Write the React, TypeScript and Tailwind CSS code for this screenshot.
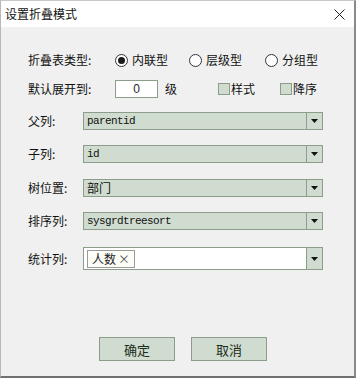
import React from "react";

const cjk = { fontFamily: '"Noto Sans CJK SC", "Noto Sans", sans-serif' };
const mono = { fontFamily: '"Liberation Mono", "Noto Sans CJK SC", monospace' };

function Radio({ checked, label, w }: { checked?: boolean; label: string; w: string }) {
  return (
    <div className={`flex items-center ${w}`}>
      <div className="w-[13px] h-[13px] rounded-full border border-[#333] bg-white flex items-center justify-center">
        {checked && <div className="w-[7px] h-[7px] rounded-full bg-[#1a1a1a]" />}
      </div>
      <span className="ml-[4px] text-[12px] leading-none text-[#111]">{label}</span>
    </div>
  );
}

function Check({ label, w }: { label: string; w: string }) {
  return (
    <div className={`flex items-center ${w}`}>
      <div className="w-[12px] h-[12px] border border-[#8c9d8c] bg-[#cfdccf]" />
      <span className="ml-[1px] text-[12px] leading-none text-[#111]">{label}</span>
    </div>
  );
}

function Arrow() {
  return (
    <svg width="7" height="4" viewBox="0 0 7 4">
      <polygon points="0,0 7,0 3.5,4" fill="#111" />
    </svg>
  );
}

function SelectRow({ label, value, isMono, mt }: { label: string; value: string; isMono?: boolean; mt: string }) {
  return (
    <div className={`flex items-center h-[18px] ${mt}`}>
      <div className="w-[55px] text-[12px] leading-none text-[#111]">{label}</div>
      <div className="w-[240px] h-[18px] border border-[#8c9d8c] bg-[#cfdccf] flex">
        <div
          className={`flex-1 flex items-center pl-[3px] leading-none text-[#111] ${isMono ? "text-[11px] tracking-[-0.6px]" : "text-[12px]"}`}
          style={isMono ? mono : cjk}
        >
          {value}
        </div>
        <div className="w-[16px] border-l border-[#8c9d8c] flex items-center justify-center">
          <Arrow />
        </div>
      </div>
    </div>
  );
}

export default function App() {
  return (
    <div className="w-[357px] h-[378px] bg-white" style={cjk}>
      <div className="w-[356px] h-[378px] border-l border-[#b8b8b8] border-r-2 border-r-[#8a8a8a] border-b-2 border-b-[#707070] border-t border-t-[#c8c8c8] flex flex-col">
        <div className="h-[26px] bg-white flex items-center justify-between pl-[4px] pr-[9px]">
          <span className="text-[12px] leading-none text-[#111]">设置折叠模式</span>
          <svg width="11" height="11" viewBox="0 0 11 11">
            <line x1="0.5" y1="0.5" x2="10.5" y2="10.5" stroke="#222" strokeWidth="1" />
            <line x1="10.5" y1="0.5" x2="0.5" y2="10.5" stroke="#222" strokeWidth="1" />
          </svg>
        </div>
        <div className="flex-1 bg-[#f0f0f0] pl-[27px] flex flex-col">
          <div className="flex items-center h-[18px] mt-[24px]">
            <div className="w-[87px] text-[12px] leading-none text-[#111]">折叠表类型:</div>
            <Radio checked label="内联型" w="w-[74px]" />
            <Radio label="层级型" w="w-[76px]" />
            <Radio label="分组型" w="w-[60px]" />
          </div>
          <div className="flex items-center h-[18px] mt-[11px]">
            <div className="w-[87px] text-[12px] leading-none text-[#111]">默认展开到:</div>
            <div className="w-[43px] h-[18px] border border-[#8c9d8c] bg-white flex items-center justify-center text-[12px] leading-none text-[#1a2a1a]" style={{ fontFamily: '"Liberation Sans", sans-serif' }}>
              0
            </div>
            <div className="w-[60px] pl-[7px] text-[12px] leading-none text-[#111]">级</div>
            <Check label="样式" w="w-[62px]" />
            <Check label="降序" w="w-[50px]" />
          </div>
          <SelectRow label="父列:" value="parentid" isMono mt="mt-[14px]" />
          <SelectRow label="子列:" value="id" isMono mt="mt-[15px]" />
          <SelectRow label="树位置:" value="部门" mt="mt-[16px]" />
          <SelectRow label="排序列:" value="sysgrdtreesort" isMono mt="mt-[15px]" />
          <div className="flex items-center h-[23px] mt-[17px]">
            <div className="w-[55px] text-[12px] leading-none text-[#111]">统计列:</div>
            <div className="w-[240px] h-[23px] border border-[#8c9d8c] bg-white flex">
              <div className="flex-1 flex items-center pl-[3px]">
                <div className="h-[18px] px-[4px] border border-[#9a9a9a] bg-[#fdfdf8] flex items-center text-[12px] leading-none text-[#222]">
                  <span>人数</span>
                  <span className="ml-[2px] text-[#555] text-[12px]">×</span>
                </div>
              </div>
              <div className="w-[16px] border-l border-[#8c9d8c] bg-[#cfdccf] flex items-center justify-center">
                <Arrow />
              </div>
            </div>
          </div>
          <div className="flex mt-[67px] pl-[71px]">
            <button className="w-[76px] h-[24px] border border-[#8c9d8c] bg-[#cfdccf] text-[13px] leading-none text-[#1c2c1c]">确定</button>
            <button className="ml-[16px] w-[76px] h-[24px] border border-[#8c9d8c] bg-[#cfdccf] text-[13px] leading-none text-[#1c2c1c]">取消</button>
          </div>
        </div>
      </div>
    </div>
  );
}
